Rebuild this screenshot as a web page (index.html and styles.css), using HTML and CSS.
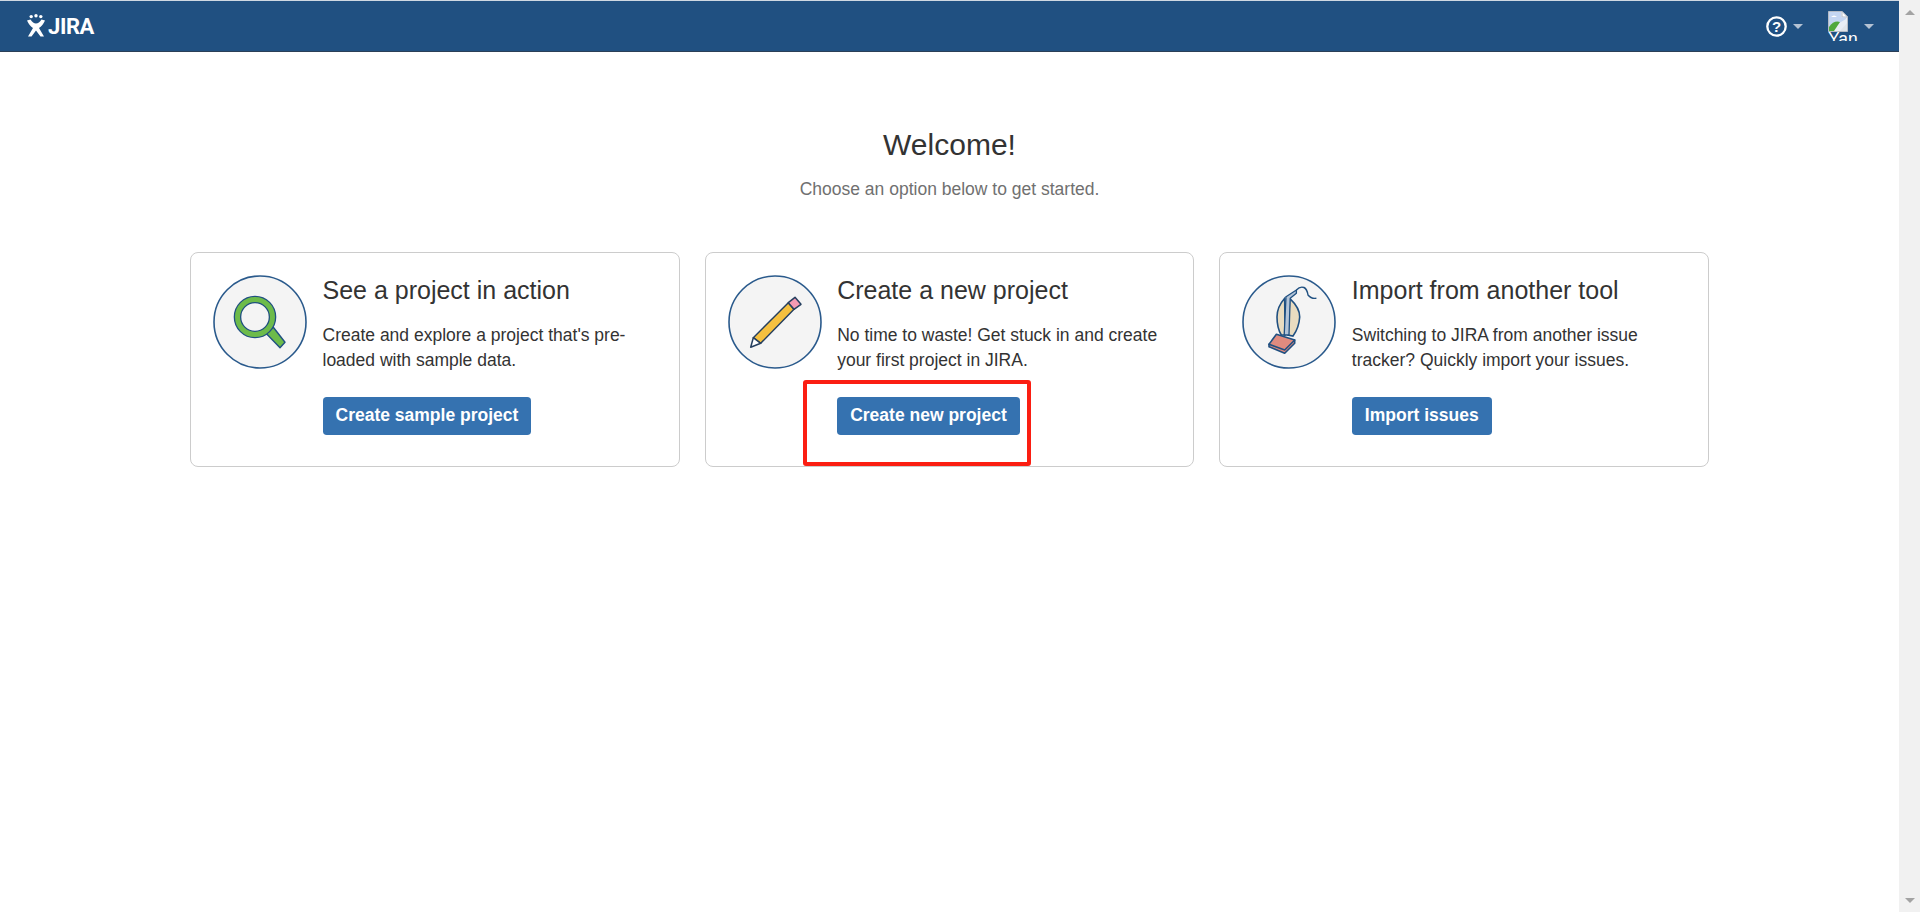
FILE: index.html
```html
<!DOCTYPE html>
<html lang="en">
<head>
<meta charset="utf-8">
<title>JIRA - Welcome</title>
<link rel="stylesheet" href="styles.css">
</head>
<body>
<div class="viewport">
  <div class="page">
    <header class="topbar">
      <a class="logo" href="#">
        <svg class="logo-mark" width="18" height="23" viewBox="0 0 18 23">
          <circle cx="4.2" cy="2.6" r="1.7" fill="#fff"/><circle cx="9" cy="1.7" r="1.7" fill="#fff"/><circle cx="13.8" cy="2.6" r="1.7" fill="#fff"/>
          <path d="M0 6.5 L3.5 5.5 Q6 9.5 9 9.5 Q12 9.5 14.5 5.5 L18 6.5 Q15.5 12 12 14 L17 22.5 L13.5 22.5 L9 16.5 L4.5 22.5 L1 22.5 L6 14 Q2.5 12 0 6.5Z" fill="#fff"/>
        </svg>
        <span class="logo-text">JIRA</span>
      </a>
      <nav class="tools">
        <a class="tool help" href="#">
          <svg width="21" height="21" viewBox="0 0 21 21">
            <circle cx="10.5" cy="10.5" r="9.2" fill="none" stroke="#fff" stroke-width="2.3"/>
            <text x="10.5" y="16" text-anchor="middle" class="help-q">?</text>
          </svg>
          <span class="caret"></span>
        </a>
        <a class="tool user" href="#">
          <span class="avatar">
            <svg width="20" height="21" viewBox="0 0 20 21">
              <path d="M0.5 0.5H14L19.5 6V20.5H0.5Z" fill="#e8edf5" stroke="#b5bcc6"/>
              <path d="M14 0.5V6H19.5Z" fill="#fff" stroke="#b5bcc6"/>
              <path d="M1 1H13V6L18 7V8L1 18Z" fill="#c4d6f2"/>
              <path d="M3 6Q6 3 9 6H3Z" fill="#fff"/>
              <path d="M1 20V16Q6 9 12 11L6 20Z" fill="#4fa83d"/>
              <path d="M12 20L19 12V20Z" fill="#dfe4ea"/>
            </svg>
            <span class="avatar-alt">Yan</span>
          </span>
          <span class="caret"></span>
        </a>
      </nav>
    </header>

    <main class="welcome">
      <h1 class="title">Welcome!</h1>
      <p class="lead">Choose an option below to get started.</p>

      <div class="cards">
        <section class="card">
          <span class="badge">
            <svg width="94" height="94" viewBox="0 0 94 94">
              <circle cx="47" cy="47" r="46" fill="#f4f4f4" stroke="#2a5a8c" stroke-width="1.6"/>
              <path d="M53 58.3 L60.3 52.3 L72 67.3 L67 72.7Z" fill="#6dbb4a" stroke="#205081" stroke-width="1.4" stroke-linejoin="round"/>
              <circle cx="42" cy="42" r="17.5" fill="none" stroke="#205081" stroke-width="7.6"/>
              <circle cx="42" cy="42" r="17.5" fill="none" stroke="#6dbb4a" stroke-width="5"/>
            </svg>
          </span>
          <div class="body">
            <h2 class="card-title">See a project in action</h2>
            <p class="card-text">Create and explore a project that's pre-loaded with sample data.</p>
            <a class="btn" href="#">Create sample project</a>
          </div>
        </section>

        <section class="card">
          <span class="badge">
            <svg width="94" height="94" viewBox="0 0 94 94">
              <circle cx="47" cy="47" r="46" fill="#f4f4f4" stroke="#2a5a8c" stroke-width="1.6"/>
              <path d="M25.3 62.7 L60.3 27.7 L66 34.3 L32.7 68.3Z" fill="#f5c03f" stroke="#253f5f" stroke-width="1.5" stroke-linejoin="round"/>
              <path d="M60.3 27.7 L67 22.3 L73 29.3 L66 34.3Z" fill="#f49ab3" stroke="#253f5f" stroke-width="1.5" stroke-linejoin="round"/>
              <path d="M25.3 62.7 L32.7 68.3 L22.7 72.3Z" fill="#fff" stroke="#253f5f" stroke-width="1.5" stroke-linejoin="round"/>
            </svg>
          </span>
          <div class="body">
            <h2 class="card-title">Create a new project</h2>
            <p class="card-text">No time to waste! Get stuck in and create your first project in JIRA.</p>
            <a class="btn" href="#">Create new project</a>
          </div>
          <span class="highlight"></span>
        </section>

        <section class="card">
          <span class="badge">
            <svg width="94" height="94" viewBox="0 0 94 94">
              <circle cx="47" cy="47" r="46" fill="#f4f4f4" stroke="#2a5a8c" stroke-width="1.6"/>
              <path d="M42.7 23.3 Q35 32 35 42 Q35 53 39.3 60 L43 60 Z" fill="#e9dcc0" stroke="#205081" stroke-width="1.6"/>
              <path d="M47.7 23.3 Q58 33 57.7 42 Q57 53 51 61 L46 60 Z" fill="#e9dcc0" stroke="#205081" stroke-width="1.6"/>
              <path d="M42.2 60 L44 21.7 L54.4 15 L54.4 18.3 L48.2 23.3 L47 60Z" fill="#b3c4d8" stroke="#205081" stroke-width="1.3" stroke-linejoin="round"/>
              <path d="M54.4 15 Q58 11 62 12.5 Q65 14 66 20 Q69 24 74.4 23.3" fill="none" stroke="#205081" stroke-width="1.4"/>
              <path d="M27 69.3 L27 71.7 L42.7 78.3 L52.7 68.3 L52.7 65 Z" fill="#e08b7f" stroke="#205081" stroke-width="1.6" stroke-linejoin="round"/>
              <path d="M34.4 59.3 L52.7 65 L42.7 75 L27 69.3Z" fill="#e08b7f" stroke="#205081" stroke-width="1.6" stroke-linejoin="round"/>
            </svg>
          </span>
          <div class="body">
            <h2 class="card-title">Import from another tool</h2>
            <p class="card-text">Switching to JIRA from another issue tracker? Quickly import your issues.</p>
            <a class="btn" href="#">Import issues</a>
          </div>
        </section>
      </div>
    </main>
  </div>

  <aside class="scrollbar">
    <span class="arrow up"></span>
    <span class="arrow down"></span>
  </aside>
</div>
</body>
</html>
```
FILE: styles.css
```css
* { box-sizing: border-box; }
html, body { margin: 0; height: 100%; overflow: hidden; }
body { font-family: "Liberation Sans", Arial, sans-serif; color: #333; background: #fff; }
a { text-decoration: none; }

.viewport { display: flex; height: 912px; }
.page { flex: 1; min-width: 0; }

.topbar {
  height: 52px;
  background: #205081;
  border-top: 1px solid #cfd8e2;
  border-bottom: 1px solid #2b3f57;
  display: flex;
  align-items: center;
  justify-content: space-between;
  padding: 0 25px 0 27px;
}
.logo { display: flex; align-items: flex-end; gap: 3px; color: #fff; height: 24px; margin-top: -3px; }
.logo-mark { flex: none; }
.logo-text { font: bold 22px/20px Roboto, "Liberation Sans", sans-serif; letter-spacing: -0.4px; }

.tools { display: flex; align-items: center; gap: 25px; }
.tool { display: flex; align-items: center; gap: 6px; color: #fff; }
.help-q { font: bold 15px "Liberation Sans", sans-serif; fill: #fff; }
.caret { flex: none; width: 0; height: 0; border-left: 5px solid transparent; border-right: 5px solid transparent; border-top: 5px solid #b4c2d3; }
.user { gap: 0; }
.avatar { width: 36px; height: 30px; overflow: hidden; display: flex; flex-direction: column; align-items: flex-start; }
.avatar svg { flex: none; }
.avatar-alt { flex: none; font-size: 17.5px; line-height: 14px; color: #fff; white-space: nowrap; }

.welcome { padding: 0 0 0 190px; }
.title { margin: 75px 0 0; padding-right: 190px; font-size: 30px; line-height: 36px; font-weight: 400; text-align: center; color: #333; }
.lead { margin: 15px 0 0; padding-right: 190px; font-size: 17.5px; line-height: 22px; text-align: center; color: #707070; }

.cards { margin: 52px 190px 0 0; display: grid; grid-template-columns: repeat(3, 1fr); gap: 25px; }
.card {
  position: relative;
  height: 215px;
  padding: 22px 22px 0;
  background: #fff;
  border: 1px solid #ccc;
  border-radius: 8px;
  display: flex;
  gap: 15.5px;
}
.badge { flex: none; width: 94px; height: 94px; }
.badge svg { display: block; }
.body { flex: 1; min-width: 0; }
.card-title { margin: 0; font-size: 25px; line-height: 30px; font-weight: 400; color: #333; }
.card-text { margin: 17.5px 0 0; font-size: 17.5px; line-height: 25px; color: #333; }
.btn {
  display: inline-block;
  margin-top: 24.5px;
  height: 37.5px;
  padding: 0 13px;
  border-radius: 3.75px;
  background: #3572b0;
  color: #fff;
  font-size: 17.5px;
  font-weight: 700;
  line-height: 37px;
}
.highlight {
  position: absolute;
  left: 97px;
  top: 127px;
  width: 228px;
  height: 86px;
  border: 4px solid #fb1e12;
  border-radius: 3px;
}

.scrollbar { flex: none; width: 21px; background: #f1f1f1; display: flex; flex-direction: column; justify-content: space-between; align-items: center; padding: 10px 0 9px; }
.arrow { width: 0; height: 0; border-left: 5px solid transparent; border-right: 5px solid transparent; }
.arrow.up { border-bottom: 5px solid #a3a3a3; }
.arrow.down { border-top: 5px solid #a3a3a3; }
```
